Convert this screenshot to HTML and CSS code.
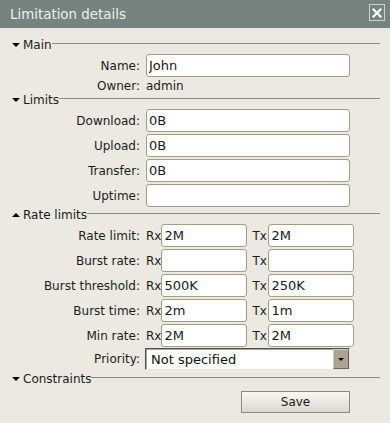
FILE: index.html
```html
<!DOCTYPE html>
<html>
<head>
<meta charset="utf-8">
<link rel="stylesheet" href="styles.css">
</head>
<body>
<div class="titlebar">
  <span class="title">Limitation details</span>
  <span class="close"><svg width="10" height="10" viewBox="0 0 10 10"><path d="M1.5 1.5 L8.5 8.5 M8.5 1.5 L1.5 8.5" stroke="#fff" stroke-width="2.2" stroke-linecap="square"/></svg></span>
</div>
<div class="content">
  <div class="sec-head"><span class="tri"></span><span class="sec-title">Main</span><span class="rule"></span></div>
  <div class="row"><span class="lbl">Name:</span><input class="txt" value="John"></div>
  <div class="row short"><span class="lbl">Owner:</span><span class="val">admin</span></div>

  <div class="sec-head flush"><span class="tri"></span><span class="sec-title">Limits</span><span class="rule"></span></div>
  <div class="row"><span class="lbl">Download:</span><input class="txt" value="0B"></div>
  <div class="row"><span class="lbl">Upload:</span><input class="txt" value="0B"></div>
  <div class="row"><span class="lbl">Transfer:</span><input class="txt" value="0B"></div>
  <div class="row"><span class="lbl">Uptime:</span><input class="txt" value=""></div>

  <div class="sec-head near"><span class="tri up"></span><span class="sec-title">Rate limits</span><span class="rule"></span></div>
  <div class="row"><span class="lbl">Rate limit:</span><div class="pair"><span class="rx">Rx</span><input class="txt half" value="2M"><span class="tx">Tx</span><input class="txt half tx-in" value="2M"></div></div>
  <div class="row"><span class="lbl">Burst rate:</span><div class="pair"><span class="rx">Rx</span><input class="txt half" value=""><span class="tx">Tx</span><input class="txt half tx-in" value=""></div></div>
  <div class="row"><span class="lbl">Burst threshold:</span><div class="pair"><span class="rx">Rx</span><input class="txt half" value="500K"><span class="tx">Tx</span><input class="txt half tx-in" value="250K"></div></div>
  <div class="row"><span class="lbl">Burst time:</span><div class="pair"><span class="rx">Rx</span><input class="txt half" value="2m"><span class="tx">Tx</span><input class="txt half tx-in" value="1m"></div></div>
  <div class="row"><span class="lbl">Min rate:</span><div class="pair"><span class="rx">Rx</span><input class="txt half" value="2M"><span class="tx">Tx</span><input class="txt half tx-in" value="2M"></div></div>
  <div class="row prio"><span class="lbl">Priority:</span>
    <div class="select"><span class="sel-text">Not specified</span><span class="sel-btn"><span class="sel-arrow"></span></span></div>
  </div>

  <div class="sec-head tight"><span class="tri"></span><span class="sec-title">Constraints</span><span class="rule"></span></div>
  <div class="row actions"><span></span><div class="btn-wrap"><button class="btn">Save</button></div></div>
</div>
</body>
</html>
```
FILE: styles.css
```css
html, body {
  margin: 0;
  padding: 0;
}
body {
  width: 390px;
  height: 423px;
  overflow: hidden;
  background: #ebe9e2;
  font-family: "DejaVu Sans", "Liberation Sans", sans-serif;
  font-size: 12px;
  color: #1c1c1c;
}
.titlebar {
  height: 28px;
  background: #76837f;
  display: flex;
  align-items: center;
  justify-content: space-between;
  padding: 0 5px 0 10px;
  box-sizing: border-box;
}
.title {
  color: #eef2ee;
  font-size: 13.4px;
}
.close {
  align-self: flex-start;
  margin-top: 4px;
  width: 16px;
  height: 17px;
  box-sizing: border-box;
  border: 1px solid #c9d1cd;
  display: flex;
  align-items: center;
  justify-content: center;
}
.content {
  padding: 10px 10px 0 0;
}
.sec-head {
  display: flex;
  align-items: center;
  height: 14px;
  padding-left: 12px;
}
.sec-head.near { margin-top: 1px; }
.sec-head.tight { margin-top: 2px; }
.tri {
  width: 0;
  height: 0;
  border-left: 4.5px solid transparent;
  border-right: 4.5px solid transparent;
  border-top: 4px solid #000;
  margin-right: 3px;
}
.tri.up {
  border-top: 0;
  border-bottom: 4px solid #000;
}
.sec-title {
  color: #1c1c1c;
}
.rule {
  flex: 1;
  height: 1px;
  background: #8d8b85;
  margin-bottom: 4px;
}
.row {
  display: grid;
  grid-template-columns: 140px 204px;
  column-gap: 6px;
  align-items: center;
  height: 23px;
  margin-top: 2px;
}
.row.short { height: 14px; }
.row.prio { height: 22px; margin-top: 1px; }
.row.actions { height: 22px; margin-top: 5px; }
.lbl {
  text-align: right;
  white-space: nowrap;
}
.val { color: #1c1c1c; }
.txt {
  box-sizing: border-box;
  width: 204px;
  height: 23px;
  margin: 0;
  padding: 0 2px;
  border: 1px solid #a69b87;
  border-radius: 3px;
  background: #fff;
  font-family: "DejaVu Sans", sans-serif;
  font-size: 13px;
  color: #1a1a1a;
  outline: none;
}
.pair {
  display: flex;
  align-items: center;
  width: 220px;
}
.txt.half { width: 86px; }
.tx { margin-left: 5px; }
.tx-in { margin-left: 1.5px; }
.select {
  box-sizing: border-box;
  width: 205px;
  height: 22px;
  margin-left: -1px;
  display: flex;
  align-items: stretch;
  background: #fff;
  border: 1px solid;
  border-color: #505050 #e6e4dd #e6e4dd #505050;
  box-shadow: inset 1px 1px 0 #a3a3a3;
}
.sel-text {
  flex: 1;
  display: flex;
  align-items: center;
  padding-left: 5px;
  font-size: 13px;
  color: #111;
}
.sel-btn {
  width: 16px;
  box-sizing: border-box;
  background: #aca391;
  border-top: 1px solid #cfc8ba;
  border-left: 1px solid #cfc8ba;
  border-right: 1px solid #6c6458;
  border-bottom: 1px solid #6c6458;
  display: flex;
  align-items: center;
  justify-content: center;
}
.sel-arrow {
  width: 0;
  height: 0;
  border-left: 3px solid transparent;
  border-right: 3px solid transparent;
  border-top: 3px solid #000;
}
.btn-wrap {
  display: flex;
  justify-content: flex-end;
}
.btn {
  box-sizing: border-box;
  width: 109px;
  height: 22px;
  margin: 0;
  padding: 0;
  border: 1px solid #8a8985;
  border-radius: 0;
  background: linear-gradient(#f8f7f3, #dad8d0);
  font-family: "DejaVu Sans", sans-serif;
  font-size: 12px;
  color: #1a1a1a;
}
```
